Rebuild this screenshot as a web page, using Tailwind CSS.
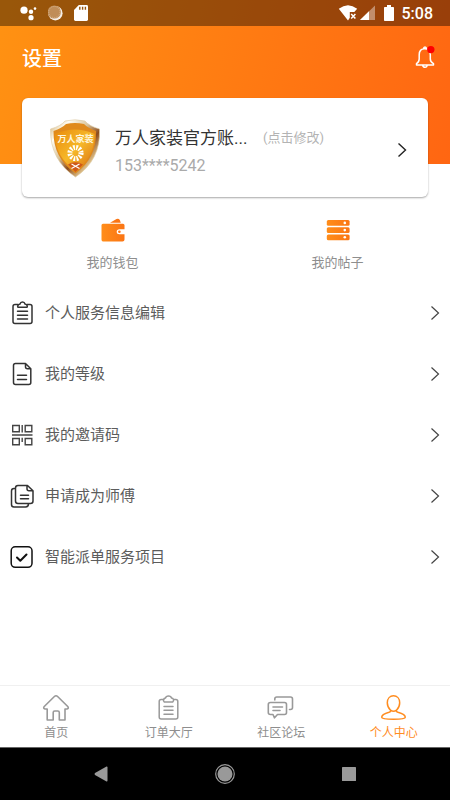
<!DOCTYPE html>
<html lang="zh-CN">
<head>
<meta charset="utf-8">
<meta name="viewport" content="width=device-width, initial-scale=1">
<title>设置</title>
<script src="https://cdn.jsdelivr.net/npm/@tailwindcss/browser@4"></script>
</head>
<body class="flex min-h-screen flex-col bg-white font-[Roboto,'Noto_Sans_CJK_SC',sans-serif] text-[#5c5c5c]">

<header class="bg-linear-[105deg] from-[#ff9212] to-[#ff6612] pb-[74px]">
  <!-- System status bar -->
  <div class="flex h-[26px] items-center justify-between bg-black/40 pr-[17px] pl-5 text-white">
    <div class="flex items-center gap-2.5">
      <svg class="h-4 w-4.5" viewBox="0 0 18 16" fill="currentColor" aria-hidden="true"><circle cx="4" cy="5.2" r="3.6"/><circle cx="11" cy="6.8" r="2.2"/><circle cx="15" cy="3.6" r="1.3"/><circle cx="11" cy="12.7" r="2.6"/></svg>
      <svg class="h-4 w-4" viewBox="0 0 16 16" aria-hidden="true"><circle cx="7.4" cy="8.2" r="7.2" fill="#fff" opacity=".9"/><circle cx="6.3" cy="7" r="6.6" fill="#c08d58"/><circle cx="6.3" cy="7" r="5.6" fill="none" stroke="#d8b48c" stroke-dasharray="1 1"/></svg>
      <svg class="h-4 w-3.5" viewBox="0 0 14 16" aria-hidden="true"><path d="M4.800 0H12.600Q14 0 14 1.400V14.600Q14 16 12.600 16H1.400Q0 16 0 14.600V5Z" fill="#fff"/><path d="M5.800 1.800v3M8.600 1.800v3M11.400 1.800v3" stroke="#98560f" stroke-width="1.400"/></svg>
    </div>
    <div class="flex items-center">
      <svg class="h-4 w-5" viewBox="0 0 20 16" aria-hidden="true"><path d="M.8 3.800Q10-3.400 19.200 3.800L16.300 7H11.800V12.800L10 15.400Z" fill="#fff"/><path d="M13.200 9l4.200 4.600M17.400 9l-4.200 4.600" stroke="#fff" stroke-width="1.500"/></svg>
      <svg class="ml-0.5 h-4 w-4" viewBox="0 0 16 16" aria-hidden="true"><path d="M15 .5V15H0Z" fill="#fff" opacity=".4"/><path d="M9 6.300V15H0Z" fill="#fff"/></svg>
      <svg class="ml-2 h-4 w-2.5" viewBox="0 0 10 16" aria-hidden="true"><path d="M3 0h4v2h2.200q.8 0 .8.8V15.200q0 .8-.8.8H.8Q0 16 0 15.200V2.800Q0 2 .8 2H3Z" fill="#fff"/></svg>
      <time class="ml-2 pt-0.5 text-base leading-none font-medium">5:08</time>
    </div>
  </div>
  <div class="flex h-16 items-center justify-between pr-[13px] pl-[22px]">
    <h1 class="pt-0.5 text-xl leading-none font-medium text-white">设置</h1>
    <button type="button" aria-label="消息通知" class="pb-0.5 text-white">
      <svg class="h-6 w-6" viewBox="0 0 24 24" fill="none" stroke="currentColor" stroke-width="1.500" stroke-linejoin="round" aria-hidden="true"><path d="M10.600 3.800Q10.600 2 12 2T13.400 3.800M3.500 20V18.700Q6.200 17 6.200 14V9.800Q6.200 3.800 11.700 3.800T17.300 9.800V14Q17.300 17 20.500 18.700V20ZM9.600 20Q10 22.200 12 22.200T14.200 20"/><circle cx="17.800" cy="4.600" r="3.700" fill="#f00" stroke="none"/></svg>
    </button>
  </div>
</header>

<main class="flex-1">
  <a href="#profile" class="relative mx-[22px] -mt-[66px] flex h-[99px] items-center rounded-md bg-white pr-[21px] pl-[26px] shadow-[0_1px_2px_rgb(0_0_0/0.35)]">
    <svg class="h-[60px] w-[54px] shrink-0" viewBox="0 0 54 60" role="img" aria-label="万人家装徽章">
      <defs>
        <linearGradient id="rim" x1="0" y1="0" x2="1" y2="1"><stop offset="0" stop-color="#c9a25a"/><stop offset=".2" stop-color="#fffdf5"/><stop offset=".42" stop-color="#d9c49a"/><stop offset=".6" stop-color="#8d4c1c"/><stop offset=".8" stop-color="#e9cf97"/><stop offset="1" stop-color="#a8783a"/></linearGradient>
        <linearGradient id="gold" x1="0" y1="0" x2="1" y2="1"><stop offset="0" stop-color="#e98b0c"/><stop offset=".5" stop-color="#f6b829"/><stop offset="1" stop-color="#d96c12"/></linearGradient>
      </defs>
      <path d="M2.500 11Q13 8 17 3Q27 .5 37 3Q41 8 51.500 11Q53 42 27.500 59Q2 42 2.500 11Z" fill="url(#rim)" stroke="#dcc9a4" stroke-width=".6"/>
      <path d="M5.500 13Q14 10 18 6Q27 4 36 6Q40 10 48 13Q49 40 27.500 55.500Q5 40 5.500 13Z" fill="#e08a1c"/>
      <path d="M7 16Q27 7 46.500 16Q47 39 27.500 53Q7 39 7 16Z" fill="url(#gold)"/>
      <path d="M20 46.500Q27 42 35 46.500L27.500 54Z" fill="#cf5818"/>
      <path d="M23.500 46l8 4.500M31.500 46l-8 4.500" stroke="#fff" stroke-width="1.200"/>
      <circle cx="27.500" cy="35" r="5.600" fill="none" stroke="#fff" stroke-width="5" stroke-dasharray="1.700 1.230"/>
      <text x="27.500" y="23.500" text-anchor="middle" font-family="'Noto Sans CJK SC',sans-serif" font-size="9" font-weight="bold" fill="#fff6dc">万人家装</text>
    </svg>
    <div class="ml-[13px] min-w-0 flex-1 pt-1">
      <div class="flex items-center gap-3 pt-1">
        <span class="w-[136px] text-[17px] leading-7 whitespace-nowrap text-[#333]">万人家装官方账...</span>
        <span class="text-[13px] leading-5 text-[#b3b3b3]">(点击修改)</span>
      </div>
      <div class="text-base leading-7 text-[#aaa]">153****5242</div>
    </div>
    <svg class="mt-1 h-3.5 w-2.5 shrink-0" viewBox="0 0 10 14" fill="none" stroke="#222" stroke-width="1.400" aria-hidden="true"><path d="M1.500 .5L8.500 7L1.500 13.500"/></svg>
  </a>

  <nav aria-label="快捷入口" class="grid grid-cols-2 pt-[21px] text-[13px] leading-5 text-[#8e8e8e]">
    <a href="#wallet" class="flex flex-col items-center gap-[11px]">
      <svg class="h-6 w-6" viewBox="0 0 24 24" aria-hidden="true"><defs><linearGradient id="orange" x1="0" y1="0" x2="1" y2="0"><stop offset="0" stop-color="#ff8d1a"/><stop offset="1" stop-color="#fb7514"/></linearGradient></defs><path d="M9 4.800L15.500 1Q17.500 0 18.800 2L19.800 4.800Z" fill="#fb7514"/><path d="M2 5.800H22Q23.500 5.800 23.500 7.300V11.200H18.500Q15.700 11.200 15.700 13.700T18.500 16.200H23.500V21.500Q23.500 23.500 21.500 23.500H2Q.5 23.500 .5 21.500V7.300Q.5 5.800 2 5.800Z" fill="url(#orange)"/><circle cx="18.400" cy="13.700" r="1.300" fill="#fb7514"/></svg>
      <span>我的钱包</span>
    </a>
    <a href="#posts" class="flex flex-col items-center gap-[11px]">
      <svg class="h-6 w-6" viewBox="0 0 24 24" aria-hidden="true"><g fill="url(#orange)"><rect x=".8" y="2" width="22.800" height="5.800" rx="1.500"/><rect x=".8" y="9.200" width="22.800" height="5.800" rx="1.500"/><rect x=".8" y="16.400" width="22.800" height="5.800" rx="1.500"/></g><g fill="#fff"><circle cx="18.800" cy="4.900" r="1.300"/><circle cx="18.800" cy="12.100" r="1.300"/><circle cx="18.800" cy="19.300" r="1.300"/></g></svg>
      <span>我的帖子</span>
    </a>
  </nav>

  <ul class="pt-[9px] text-[15px]">
    <li><a href="#service-info" class="flex h-[61px] items-center gap-[11px] px-2.5">
      <svg class="h-6 w-6" viewBox="0 0 24 24" fill="none" stroke="#333" stroke-width="1.500" stroke-linecap="round" stroke-linejoin="round" aria-hidden="true"><path d="M8 3.500H5Q3 3.500 3 5.500V20.500Q3 22.500 5 22.500H20Q22 22.500 22 20.500V5.500Q22 3.500 20 3.500H17M8.500 6.200Q7.600 6.200 7.700 5.200Q8 3.300 10 3Q10.500 1 12.500 1T15 3Q17 3.300 17.300 5.200Q17.400 6.200 16.500 6.200ZM7.500 10.300H17.500M7.500 14.200H17.500M7.500 18H17.500"/></svg>
      <span class="flex-1 pt-0.5">个人服务信息编辑</span>
      <svg class="h-3.5 w-2.5" viewBox="0 0 10 14" fill="none" stroke="#444" stroke-width="1.200" aria-hidden="true"><path d="M1.500 .5L8.500 7L1.500 13.500"/></svg>
    </a></li>
    <li><a href="#level" class="flex h-[61px] items-center gap-[11px] px-2.5">
      <svg class="h-6 w-6" viewBox="0 0 24 24" fill="none" stroke="#333" stroke-width="1.500" stroke-linecap="round" stroke-linejoin="round" aria-hidden="true"><path d="M15.500 1.500H5.500Q3.500 1.500 3.500 3.500V20.500Q3.500 22.500 5.500 22.500H18.800Q20.800 22.500 20.800 20.500V6.800ZM15.500 1.500V4.800Q15.500 6.800 17.500 6.800H20.800M7.500 13.300H16.500M7.500 17.500H16.500"/></svg>
      <span class="flex-1 pt-0.5">我的等级</span>
      <svg class="h-3.5 w-2.5" viewBox="0 0 10 14" fill="none" stroke="#444" stroke-width="1.200" aria-hidden="true"><path d="M1.500 .5L8.500 7L1.500 13.500"/></svg>
    </a></li>
    <li><a href="#invite" class="flex h-[61px] items-center gap-[11px] px-2.5">
      <svg class="h-6 w-6" viewBox="0 0 24 24" fill="none" stroke="#444" stroke-width="1.400" aria-hidden="true"><path d="M2.700 2.500H9.300V8.800H2.700ZM15.200 2.500H21.800V8.800H15.200ZM2.700 15.500H9.300V21.800H2.700ZM15.200 15.500H21.800V21.800H15.200ZM12.200 2V9.500M2 12H22.500M12.200 14.800V19"/></svg>
      <span class="flex-1 pt-0.5">我的邀请码</span>
      <svg class="h-3.5 w-2.5" viewBox="0 0 10 14" fill="none" stroke="#444" stroke-width="1.200" aria-hidden="true"><path d="M1.500 .5L8.500 7L1.500 13.500"/></svg>
    </a></li>
    <li><a href="#apply" class="flex h-[61px] items-center gap-[11px] px-2.5">
      <svg class="h-6 w-6" viewBox="0 0 24 24" fill="none" stroke="#333" stroke-width="1.500" stroke-linecap="round" stroke-linejoin="round" aria-hidden="true"><path d="M17.500 1.500H8Q5.500 1.500 5.500 4V17Q5.500 19.500 8 19.500H20.500Q23 19.500 23 17V6.800ZM17 1.800V4.800Q17 6.800 19 6.800H22.600M5.500 4.500H4Q1.500 4.500 1.500 7V20.500Q1.500 23 4 23H15.500Q18.500 23 18.500 19.800M10.500 11.200H18.500M10.500 14.800H18.500"/></svg>
      <span class="flex-1 pt-0.5">申请成为师傅</span>
      <svg class="h-3.5 w-2.5" viewBox="0 0 10 14" fill="none" stroke="#444" stroke-width="1.200" aria-hidden="true"><path d="M1.500 .5L8.500 7L1.500 13.500"/></svg>
    </a></li>
    <li><a href="#dispatch" class="flex h-[61px] items-center gap-[11px] px-2.5">
      <svg class="h-6 w-6" viewBox="0 0 24 24" fill="none" stroke="#111" stroke-width="1.500" stroke-linecap="round" stroke-linejoin="round" aria-hidden="true"><rect x="1.200" y="1.800" width="20.800" height="20.500" rx="4"/><path d="M7 12.500L10.300 15.800L16.500 9.500" stroke-width="2"/></svg>
      <span class="flex-1 pt-0.5">智能派单服务项目</span>
      <svg class="h-3.5 w-2.5" viewBox="0 0 10 14" fill="none" stroke="#444" stroke-width="1.200" aria-hidden="true"><path d="M1.500 .5L8.500 7L1.500 13.500"/></svg>
    </a></li>
  </ul>
</main>

<nav aria-label="主导航" class="grid h-[62px] grid-cols-4 border-t border-[#f0f0f0] text-xs leading-4 text-[#8e8e8e]">
  <a href="#home" class="flex flex-col items-center gap-[3px] pt-2">
    <svg class="h-7 w-7" viewBox="0 0 28 28" fill="none" stroke="#999" stroke-width="1.600" stroke-linejoin="round" aria-hidden="true"><path d="M14 1.700Q14.800 1.700 15.600 2.500L26 12.800Q27 14.500 25 15H23V26H17.300V18.500Q17.300 17 15.800 17H12.700Q11.200 17 11.200 18.500V26H5.200V15H3Q1 14.500 2 12.800L12.400 2.500Q13.200 1.700 14 1.700Z"/></svg>
    <span>首页</span>
  </a>
  <a href="#orders" class="flex flex-col items-center gap-[3px] pt-2">
    <svg class="h-7 w-7" viewBox="0 0 28 28" fill="none" stroke="#999" stroke-width="1.500" stroke-linecap="round" stroke-linejoin="round" aria-hidden="true"><path d="M9 5.500H6.200Q4.200 5.500 4.200 7.500V23Q4.200 25 6.200 25H20.800Q22.800 25 22.800 23V7.500Q22.800 5.500 20.800 5.500H18.500M9.300 8Q8.200 6.800 8.500 5.500Q9 4 10.500 4Q11 2 13.500 2T16.500 4Q18 4 18.500 5.500Q18.800 6.800 17.700 8ZM9 12.500H18M9 16.300H18M9 20.200H18"/></svg>
    <span>订单大厅</span>
  </a>
  <a href="#forum" class="flex flex-col items-center gap-[3px] pt-2">
    <svg class="h-7 w-7" viewBox="0 0 28 28" fill="none" stroke="#999" stroke-width="1.600" stroke-linecap="round" stroke-linejoin="round" aria-hidden="true"><path d="M7.800 6V5Q7.800 3 9.800 3H23.500Q25.500 3 25.500 5V13.500Q25.500 15.500 23.500 15.500H22.500M3.500 8.500H17.500Q19.500 8.500 19.500 10.500V18.500Q19.500 20.500 17.500 20.500H10.500L7.500 23.800L6 20.500H3.500Q1.300 20.500 1.300 18.500V10.500Q1.300 8.500 3.500 8.500ZM6 13H15.500M6 16.500H13"/></svg>
    <span>社区论坛</span>
  </a>
  <a href="#me" aria-current="page" class="flex flex-col items-center gap-[3px] pt-2 text-[#ff8c1f]">
    <svg class="h-7 w-7" viewBox="0 0 28 28" fill="none" stroke="currentColor" stroke-width="1.500" stroke-linejoin="round" aria-hidden="true"><path d="M13.500 1.700C17 1.700 19.700 4.500 19.700 8.800C19.700 12 18.300 14.500 16.500 16.200C16.100 17.400 16.500 17.700 18 18.200C21.500 19.200 25.300 20.500 25.300 23.200C25.300 24.800 20.500 25.200 13.500 25.200S1.700 24.800 1.700 23.200C1.700 20.500 5.500 19.200 9 18.200C10.500 17.700 10.900 17.400 10.500 16.200C8.700 14.500 7.300 12 7.300 8.800C7.300 4.500 10 1.700 13.500 1.700ZM10.500 16.200Q13.500 18.300 16.500 16.200"/></svg>
    <span>个人中心</span>
  </a>
</nav>

<!-- System navigation bar -->
<div class="flex h-[53px] items-center justify-center gap-[100px] border-t border-[#666] bg-black text-[#999]">
  <button type="button" aria-label="返回"><svg class="h-6 w-6" viewBox="0 0 24 24" fill="currentColor" aria-hidden="true"><path d="M17.500 4.500Q18.500 4.200 18.500 5.500V18.500Q18.500 19.800 17.500 19.500L6 13Q5 12 6 11Z"/></svg></button>
  <button type="button" aria-label="主屏幕"><svg class="h-6 w-6" viewBox="0 0 24 24" fill="currentColor" aria-hidden="true"><circle cx="12" cy="12" r="7.500"/><circle cx="12" cy="12" r="9.300" fill="none" stroke="currentColor" stroke-width="1.200"/></svg></button>
  <button type="button" aria-label="最近任务"><svg class="h-6 w-6" viewBox="0 0 24 24" fill="currentColor" aria-hidden="true"><rect x="5" y="5" width="14" height="14" rx=".6"/></svg></button>
</div>
</body>
</html>
